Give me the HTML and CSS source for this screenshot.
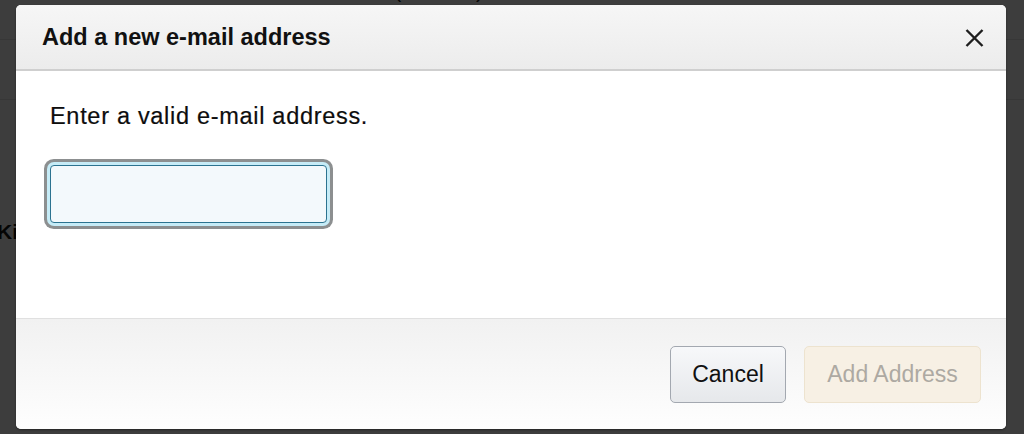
FILE: index.html
```html
<!DOCTYPE html>
<html lang="en">
<head>
<meta charset="utf-8">
<title>Add a new e-mail address</title>
<link rel="stylesheet" href="styles.css">
</head>
<body>
<div class="page">
  <div class="page-top">
    <span class="page-top-text">Kindle (5th Gen)</span>
  </div>
  <div class="page-band"></div>
  <div class="page-side">Kindle</div>
</div>
<div class="overlay"></div>
<div class="modal" role="dialog" aria-labelledby="modal-title">
  <header class="modal-header">
    <h2 class="modal-title" id="modal-title">Add a new e-mail address</h2>
    <button class="modal-close" aria-label="Close">
      <svg width="19" height="18" viewBox="0 0 19 18"><path d="M1.5 1 L17.5 17 M17.5 1 L1.5 17" stroke="#1e1e1e" stroke-width="2.4" fill="none"/></svg>
    </button>
  </header>
  <div class="modal-body">
    <p class="modal-text">Enter a valid e-mail address.</p>
    <input class="email-input" type="text" aria-label="E-mail address">
  </div>
  <footer class="modal-footer">
    <button class="btn btn-cancel">Cancel</button>
    <button class="btn btn-add" disabled>Add Address</button>
  </footer>
</div>
</body>
</html>
```

FILE: styles.css
```css
* { box-sizing: border-box; }
html, body { margin: 0; padding: 0; }
body {
  width: 1024px;
  height: 434px;
  overflow: hidden;
  font-family: "Liberation Sans", Arial, Helvetica, sans-serif;
  background: #fff;
  position: relative;
}
.page {
  height: 434px;
  background: #fff;
}
.page-top {
  height: 40px;
  border-bottom: 1px solid #e4e4e4;
  position: relative;
  overflow: hidden;
}
.page-top-text {
  position: absolute;
  left: 330px;
  top: -21px;
  font-size: 21px;
  color: #222;
}
.page-band {
  height: 60px;
  border-bottom: 1px solid #e4e4e4;
}
.page-side {
  position: absolute;
  left: -3px;
  top: 220px;
  font-size: 21px;
  font-weight: bold;
  color: #111;
}
.overlay {
  position: absolute;
  inset: 0;
  background: rgba(0, 0, 0, 0.76);
}
.modal {
  position: absolute;
  left: 16px;
  top: 5px;
  width: 990px;
  height: 424px;
  background: #fff;
  border-radius: 5px;
  display: flex;
  flex-direction: column;
  overflow: hidden;
  box-shadow: 0 1px 2px rgba(0,0,0,0.4);
}
.modal-header {
  height: 66px;
  flex: none;
  display: flex;
  align-items: center;
  justify-content: space-between;
  padding: 0 22px 0 26px;
  background: linear-gradient(#f6f6f6, #ececec);
  border-bottom: 2px solid #cfcfcf;
}
.modal-title {
  margin: 0;
  font-size: 23.5px;
  font-weight: bold;
  color: #111;
  line-height: 1;
  padding-top: 2px;
}
.modal-close {
  border: 0;
  background: none;
  padding: 0;
  width: 19px;
  height: 18px;
  margin-top: 1px;
  display: flex;
}
.modal-body {
  flex: 1;
  padding: 31px 0 0 34px;
}
.modal-text {
  margin: 0;
  font-size: 23.5px;
  letter-spacing: 0.7px;
  color: #0d0d0d;
  line-height: 28px;
  -webkit-text-stroke: 0.2px #0d0d0d;
}
.email-input {
  display: block;
  margin: 35px 0 0 0;
  width: 277px;
  height: 58px;
  border: 1px solid #2b7390;
  border-radius: 4px;
  background: #f3f9fc;
  box-shadow: 0 0 0 3px #c6ecf7, 0 0 0 6px #8c8f90;
  outline: none;
  font-size: 20px;
}
.modal-footer {
  height: 111px;
  flex: none;
  display: flex;
  justify-content: flex-end;
  align-items: flex-start;
  gap: 18px;
  padding: 27px 25px 0 0;
  border-top: 1px solid #e0e0e0;
  background: linear-gradient(#f1f1f1, #fefefe);
}
.btn {
  height: 57px;
  border-radius: 5px;
  font-family: "Liberation Sans", Arial, Helvetica, sans-serif;
  font-size: 23px;
  padding: 0;
}
.btn-cancel {
  width: 116px;
  border: 1px solid #a3a8b0;
  background: linear-gradient(#f7f8fa, #e6e8eb);
  color: #111;
}
.btn-add {
  width: 177px;
  border: 1px solid #ede3cf;
  background: #f7f0e4;
  color: #ada9a2;
}
```
